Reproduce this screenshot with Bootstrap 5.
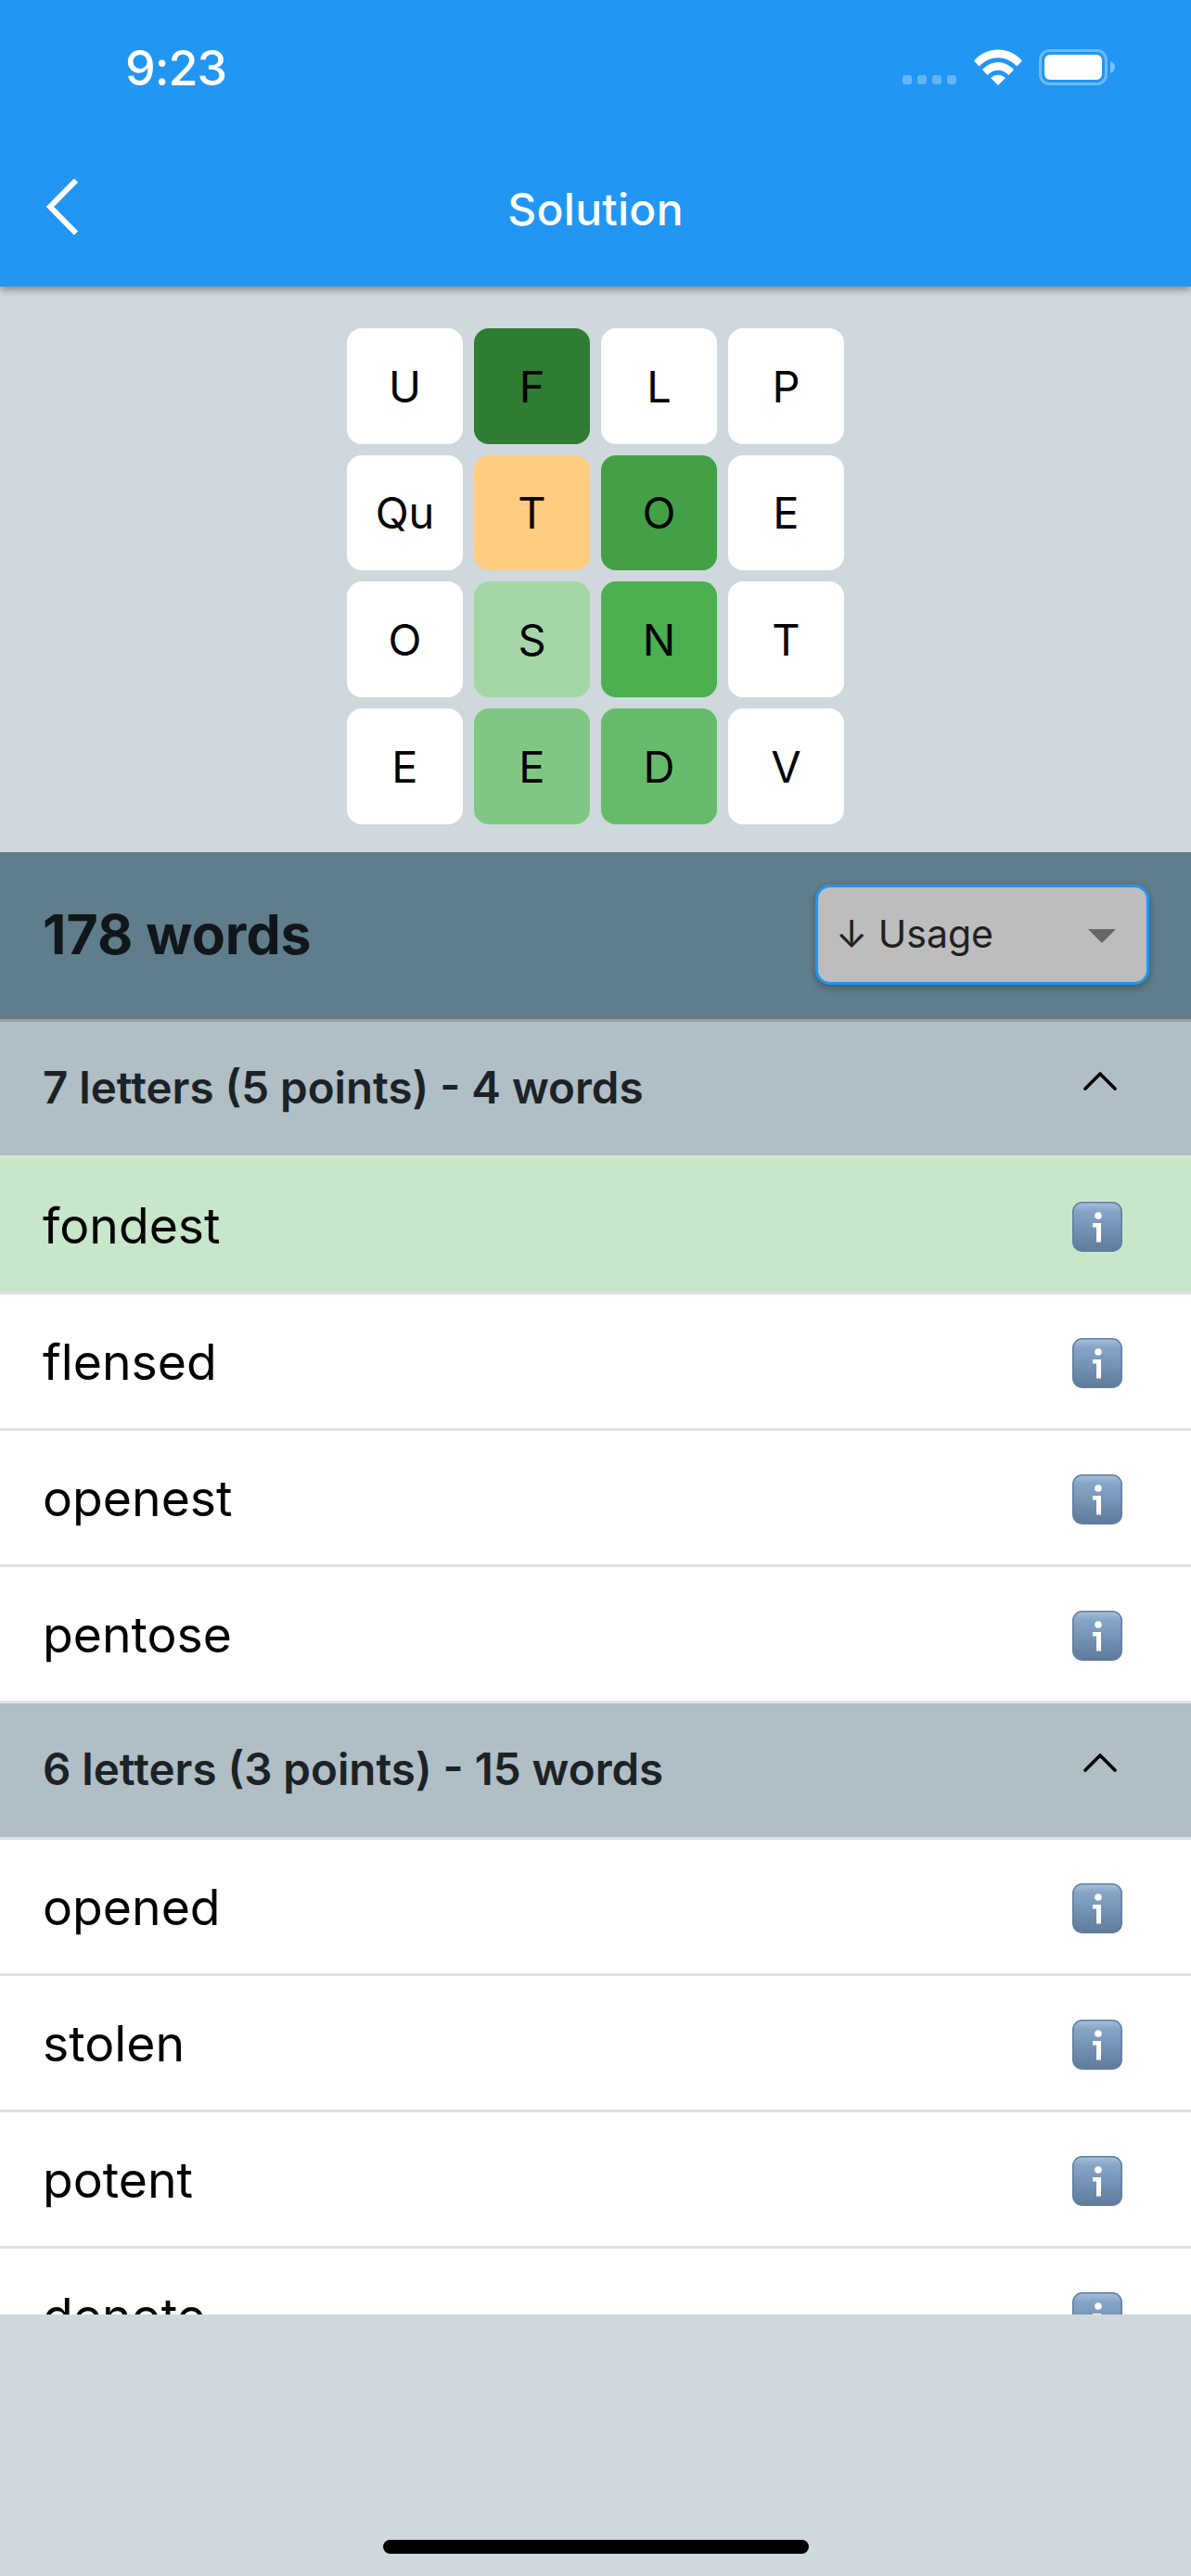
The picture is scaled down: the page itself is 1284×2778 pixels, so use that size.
<!DOCTYPE html>
<html lang="en">
<head>
  <meta charset="UTF-8">
  <title>Solution</title>
  <meta name="viewport" content="width=device-width, initial-scale=1">
  <link href="https://cdn.jsdelivr.net/npm/bootstrap@5.3.0/dist/css/bootstrap.min.css" rel="stylesheet">
  <style>
    html, body { margin: 0; }
    body { width: 1284px; height: 2778px; overflow: hidden; background: #cfd8dc; font-family: Inter, "Liberation Sans", sans-serif; color: #000; }
    .app-bar { height: 309px; background: #2196f3; color: #fff; box-shadow: 0 3px 8px rgba(0,0,0,.4); position: relative; z-index: 2; }
    .status-row { height: 145px; padding: 48px 82px 0 135px; }
    .status-time { font-size: 52px; font-weight: 500; line-height: 1; width: 107px; letter-spacing: -1px; }
    .status-icons { margin-top: 5px; }
    .status-dots { gap: 6px; margin-top: 28px; margin-right: 19px; }
    .status-dots i { display: block; width: 10px; height: 10px; border-radius: 3px; background: rgba(255,255,255,.3); }
    .title-row { height: 164px; padding: 0 0 8px 49px; }
    .app-title { flex: 1; text-align: center; font-size: 48px; font-weight: 500; margin: 6px 84px 0 0; line-height: 1; letter-spacing: .3px; }
    .tile-area { height: 610px; padding-top: 45px; }
    .tile-grid { grid-template-columns: repeat(4, 125px); grid-auto-rows: 124.5px; column-gap: 12px; row-gap: 12.2px; justify-content: center; }
    .tile { border-radius: 16px; background: #fff; font-size: 47px; line-height: 1; }
    .sort-bar { height: 183px; background: #607d8b; border-bottom: 3px solid #9e9e9e; padding: 0 45px 0 46px; }
    .word-count { font-size: 59px; font-weight: 700; color: #11161a; margin-top: -2px; }
    .sort-box { width: 360px; height: 108px; box-sizing: border-box; margin-top: -2px; border: 3px solid #2196f3; border-radius: 16px; background: #bdbdbd; box-shadow: 0 3px 8px rgba(0,0,0,.3); padding: 0 33px 0 19px; font-size: 41px; color: #212121; }
    .sort-caret { width: 0; height: 0; border-left: 15px solid transparent; border-right: 15px solid transparent; border-top: 15px solid #666; margin-top: 3px; }
    .word-list { height: 1394px; overflow: hidden; background: #fff; }
    .group-row, .word-row { height: 147px; box-sizing: border-box; border-bottom: 3px solid #e0e0e0; padding: 0 74px 0 46px; }
    .group-row { background: #b0bec5; font-size: 47.5px; font-weight: 600; color: #1c2225; padding-right: 80px; }
    .group-row span { margin-top: -2px; }
    .group-chev { margin-bottom: 18px; }
    .word-row { background: #fff; font-size: 53.5px; line-height: 1; }
    .word-row span { margin-top: 1px; }
    .word-row svg { margin-top: 4px; }
    .word-row.found { background: #c8e6c9; }
    .home-bar { width: 459px; height: 15px; border-radius: 8px; background: #000; margin: 243px auto 0; }
  </style>
</head>
<body>

<svg width="0" height="0" class="d-block">
  <defs>
    <linearGradient id="infoFill" x1="0" y1="0" x2="0" y2="1">
      <stop offset="0" stop-color="#a9c0da"/>
      <stop offset=".18" stop-color="#85a5c8"/>
      <stop offset="1" stop-color="#5f7b9c"/>
    </linearGradient>
    <symbol id="infoIcon" viewBox="0 0 54 54">
      <rect x=".75" y=".75" width="52.5" height="52.5" rx="10" fill="url(#infoFill)" stroke="#5f7f9f" stroke-width="1.5"/>
      <circle cx="28" cy="15" r="3.8" fill="#fff"/>
      <path d="M22 23h9v20.5h-5V27.5h-4z" fill="#fff"/>
    </symbol>
    <symbol id="chevUp" viewBox="0 0 36 21">
      <path d="M2 19 18 3l16 16" fill="none" stroke="#000" stroke-width="3.6" stroke-linecap="round" stroke-linejoin="round"/>
    </symbol>
  </defs>
</svg>

<header class="app-bar">
  <div class="status-row d-flex align-items-start">
    <div class="status-time">9:23</div>
    <div class="status-icons d-flex align-items-start ms-auto">
      <div class="status-dots d-flex"><i></i><i></i><i></i><i></i></div>
      <svg width="52" height="39" viewBox="0 0 52 39" class="me-3 d-block">
        <path d="M0 12.5C14-3.5 38-3.5 52 12.5l-5.5 6C34.5 6 17.5 6 5.5 18.5z" fill="#fff"/>
        <path d="M9 22c10-10.5 24-10.5 34 0l-5.5 6c-7-7-16-7-23 0z" fill="#fff"/>
        <path d="M18 31c5-4.5 11-4.5 16 0l-8 8z" fill="#fff"/>
      </svg>
      <svg width="84" height="39" viewBox="0 0 84 39" class="d-block">
        <rect x="3.5" y="1.5" width="71" height="36" rx="10" fill="none" stroke="#fff" stroke-opacity=".35" stroke-width="3"/>
        <rect x="8" y="6" width="62" height="27" rx="6" fill="#fff"/>
        <path d="M79 13c3 1 5 3.5 5 6.5s-2 5.5-5 6.5z" fill="#fff" fill-opacity=".4"/>
      </svg>
    </div>
  </div>
  <div class="title-row d-flex align-items-center">
    <svg width="35" height="60" viewBox="0 0 35 60" class="d-block">
      <path d="M33 1.5 5 30l28 28.5" fill="none" stroke="#fff" stroke-width="6"/>
    </svg>
    <h1 class="app-title">Solution</h1>
  </div>
</header>

<section class="tile-area">
  <div class="tile-grid d-grid" id="tileGrid"></div>
</section>

<div class="sort-bar d-flex align-items-center justify-content-between">
  <div class="word-count">178 words</div>
  <div class="sort-box d-flex align-items-center justify-content-between">
    <span>↓ Usage</span>
    <span class="sort-caret"></span>
  </div>
</div>

<main class="word-list" id="wordList"></main>

<div class="home-bar"></div>

<script>
// board letters with their heat colour
const tiles = [
  ["U"], ["F", "#2e7d32"], ["L"], ["P"],
  ["Qu"], ["T", "#ffcc80"], ["O", "#43a047"], ["E"],
  ["O"], ["S", "#a5d6a7"], ["N", "#4caf50"], ["T"],
  ["E"], ["E", "#81c784"], ["D", "#66bb6a"], ["V"]
];

const tileGrid = document.getElementById("tileGrid");
tiles.forEach(([letter, color]) => {
  const tile = document.createElement("div");
  tile.className = "tile d-flex align-items-center justify-content-center";
  tile.textContent = letter;
  if (color) tile.style.background = color;
  tileGrid.appendChild(tile);
});

const groups = [
  { title: "7 letters (5 points) - 4 words", words: ["fondest", "flensed", "openest", "pentose"] },
  { title: "6 letters (3 points) - 15 words", words: ["opened", "stolen", "potent", "denote"] }
];

const wordList = document.getElementById("wordList");
groups.forEach(group => {
  wordList.insertAdjacentHTML("beforeend",
    `<div class="group-row d-flex align-items-center justify-content-between"><span>${group.title}</span><svg width="36" height="21" class="group-chev d-block"><use href="#chevUp"/></svg></div>`);
  group.words.forEach(word => {
    const found = word === "fondest" ? " found" : "";
    wordList.insertAdjacentHTML("beforeend",
      `<div class="word-row${found} d-flex align-items-center justify-content-between"><span>${word}</span><svg width="54" height="54" class="d-block"><use href="#infoIcon"/></svg></div>`);
  });
});
</script>
<script src="https://cdn.jsdelivr.net/npm/bootstrap@5.3.0/dist/js/bootstrap.bundle.min.js"></script>
</body>
</html>
